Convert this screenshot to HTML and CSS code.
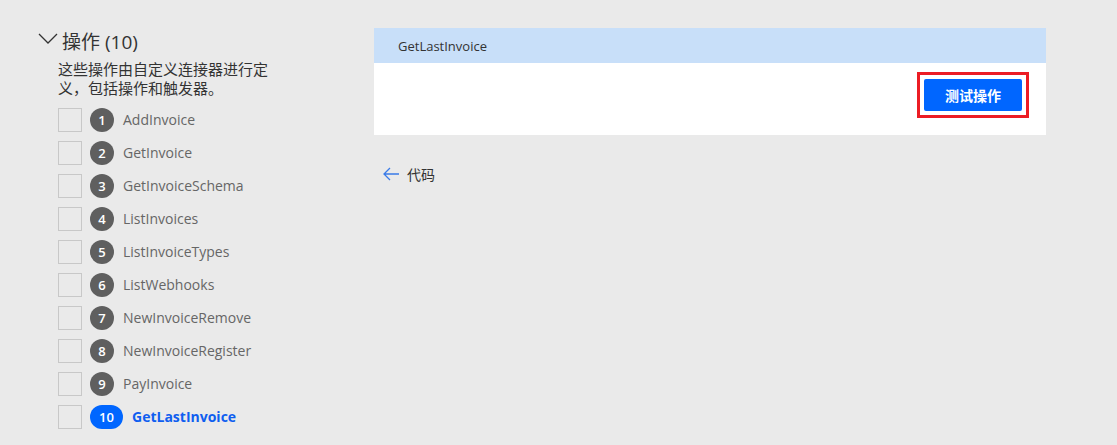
FILE: index.html
```html
<!DOCTYPE html>
<html lang="zh">
<head>
<meta charset="utf-8">
<link rel="stylesheet" href="styles.css">
</head>
<body>
<div class="page">
  <aside class="ops">
    <div class="ops-head">
      <svg class="chev" width="20" height="12" viewBox="0 0 20 12"><path d="M1 1 L10 10 L19 1" fill="none" stroke="#333" stroke-width="1.3"/></svg>
      <h2 class="ops-title">操作 (10)</h2>
    </div>
    <p class="ops-desc">这些操作由自定义连接器进行定义，包括操作和触发器。</p>
    <ul class="ops-list">
      <li class="op"><span class="cb"></span><span class="num">1</span><span class="name">AddInvoice</span></li>
      <li class="op"><span class="cb"></span><span class="num">2</span><span class="name">GetInvoice</span></li>
      <li class="op"><span class="cb"></span><span class="num">3</span><span class="name">GetInvoiceSchema</span></li>
      <li class="op"><span class="cb"></span><span class="num">4</span><span class="name">ListInvoices</span></li>
      <li class="op"><span class="cb"></span><span class="num">5</span><span class="name">ListInvoiceTypes</span></li>
      <li class="op"><span class="cb"></span><span class="num">6</span><span class="name">ListWebhooks</span></li>
      <li class="op"><span class="cb"></span><span class="num">7</span><span class="name">NewInvoiceRemove</span></li>
      <li class="op"><span class="cb"></span><span class="num">8</span><span class="name">NewInvoiceRegister</span></li>
      <li class="op"><span class="cb"></span><span class="num">9</span><span class="name">PayInvoice</span></li>
      <li class="op active"><span class="cb"></span><span class="num">10</span><span class="name">GetLastInvoice</span></li>
    </ul>
  </aside>
  <main class="detail">
    <section class="card">
      <div class="card-head">GetLastInvoice</div>
      <div class="card-body">
        <div class="highlight"><button class="btn-test">测试操作</button></div>
      </div>
    </section>
    <a class="back">
      <svg width="16" height="14" viewBox="0 0 16 14"><path d="M7 1 L1 7 L7 13 M1 7 H16" fill="none" stroke="#3a7be8" stroke-width="1.3"/></svg>
      <span>代码</span>
    </a>
  </main>
</div>
</body>
</html>
```
FILE: styles.css
```css
* { box-sizing: border-box; }
html, body { margin: 0; padding: 0; }
body {
  background: #eaeaea;
  font-family: "Open Sans", "Noto Sans CJK SC", sans-serif;
  color: #333;
  width: 1117px;
  height: 445px;
  overflow: hidden;
}
.page {
  display: flex;
  padding-top: 28px;
}
.ops {
  width: 374px;
  flex: none;
  padding-left: 38px;
}
.ops-head {
  display: flex;
  align-items: center;
  gap: 4px;
  height: 26px;
}
.chev { display: block; margin-top: -4px; }
.ops-title {
  margin: 0;
  font-weight: 400;
  font-size: 19px;
  color: #333;
  font-family: "Open Sans", "Noto Sans CJK SC", sans-serif;
}
.ops-desc {
  margin: 5px 0 0 20px;
  width: 216px;
  font-size: 15px;
  line-height: 19px;
  color: #333;
  font-family: "Noto Sans CJK SC", sans-serif;
}
.ops-list {
  list-style: none;
  margin: 6px 0 0 20px;
  padding: 0;
}
.op {
  display: flex;
  align-items: center;
  height: 33px;
}
.cb {
  width: 24px;
  height: 24px;
  border: 1px solid #c8c8c8;
  margin-right: 8px;
}
.num {
  width: 24px;
  height: 24px;
  border-radius: 12px;
  background: #5f5f5f;
  color: #fff;
  font-size: 13px;
  font-weight: 600;
  display: flex;
  align-items: center;
  justify-content: center;
  margin-right: 9px;
}
.name {
  font-size: 14px;
  color: #666;
}
.op.active .num {
  width: 33px;
  background: #0066ff;
  margin-right: 9px;
}
.op.active .name {
  color: #0f5ef0;
  font-weight: 700;
}
.detail {
  width: 672px;
  flex: none;
}
.card {
  background: #fff;
}
.card-head {
  background: #c8dff9;
  height: 35px;
  display: flex;
  align-items: center;
  padding-left: 24px;
  font-size: 13px;
  color: #333;
}
.card-body {
  height: 72px;
  display: flex;
  justify-content: flex-end;
  align-items: flex-start;
  padding: 9px 17px 0 0;
}
.highlight {
  border: 3px solid #ec1c24;
  padding: 4px;
}
.btn-test {
  display: block;
  width: 98px;
  height: 32px;
  border: 0;
  border-radius: 2px;
  background: #0066ff;
  color: #fff;
  font-family: "Noto Sans CJK SC", sans-serif;
  font-weight: 700;
  font-size: 14px;
}
.back {
  display: flex;
  align-items: center;
  gap: 8px;
  margin: 29px 0 0 9px;
  font-size: 14px;
  color: #333;
  font-family: "Noto Sans CJK SC", sans-serif;
}
.back svg { display: block; }
```
